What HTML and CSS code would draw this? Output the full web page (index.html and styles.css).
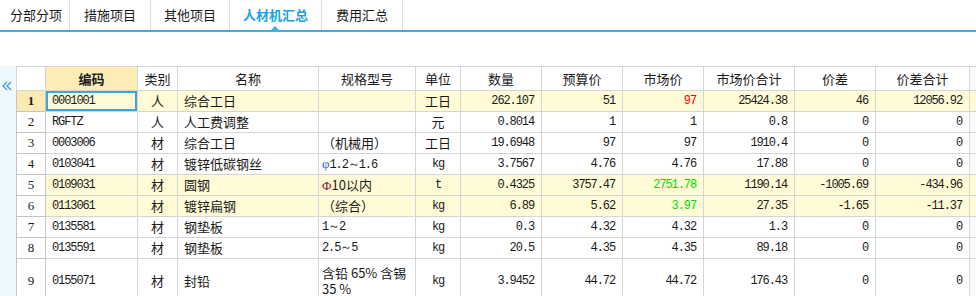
FILE: index.html
```html
<!DOCTYPE html>
<html lang="zh">
<head>
  <meta charset="UTF-8">
  <title>人材机汇总</title>
  <link rel="stylesheet" href="styles.css">
</head>
<body>

  <div class="tabs">
    <div class="tab first">分部分项</div>
    <div class="tab">措施项目</div>
    <div class="tab">其他项目</div>
    <div class="tab active">人材机汇总</div>
    <div class="tab">费用汇总</div>
  </div>

  <div class="main">
    <div class="side">
      <svg class="fold" width="10" height="10" viewBox="0 0 10 10">
        <path d="M5 1 L1 5 L5 9 M9 1 L5 5 L9 9" fill="none" stroke="#3b9fd2" stroke-width="1.3"/>
      </svg>
      <span class="notch"></span>
    </div>
    <div class="grid">
      <table>
        <colgroup>
          <col style="width:29px"><col style="width:92px"><col style="width:40px"><col style="width:141px">
          <col style="width:97px"><col style="width:45px"><col style="width:81px"><col style="width:81px">
          <col style="width:81px"><col style="width:91px"><col style="width:81px"><col style="width:94px">
          <col style="width:20px">
        </colgroup>
        <thead>
          <tr>
            <th class="rn"></th>
            <th class="sel-col"><b>编码</b></th>
            <th>类别</th>
            <th>名称</th>
            <th>规格型号</th>
            <th>单位</th>
            <th>数量</th>
            <th>预算价</th>
            <th>市场价</th>
            <th>市场价合计</th>
            <th>价差</th>
            <th>价差合计</th>
            <th class="rest"></th>
          </tr>
        </thead>
        <tbody>
          <tr class="hl">
            <td class="rn cur">1</td><td class="code focus">0001001</td><td class="c">人</td><td class="name">综合工日</td>
            <td class="spec"></td><td class="c">工日</td><td class="n">262.107</td><td class="n">51</td>
            <td class="n red">97</td><td class="n">25424.38</td><td class="n">46</td><td class="n">12056.92</td><td class="rest"></td>
          </tr>
          <tr>
            <td class="rn">2</td><td class="code">RGFTZ</td><td class="c">人</td><td class="name">人工费调整</td>
            <td class="spec"></td><td class="c">元</td><td class="n">0.8014</td><td class="n">1</td>
            <td class="n">1</td><td class="n">0.8</td><td class="n">0</td><td class="n">0</td><td class="rest"></td>
          </tr>
          <tr>
            <td class="rn">3</td><td class="code">0003006</td><td class="c">材</td><td class="name">综合工日</td>
            <td class="spec">（机械用）</td><td class="c">工日</td><td class="n">19.6948</td><td class="n">97</td>
            <td class="n">97</td><td class="n">1910.4</td><td class="n">0</td><td class="n">0</td><td class="rest"></td>
          </tr>
          <tr>
            <td class="rn">4</td><td class="code">0103041</td><td class="c">材</td><td class="name">镀锌低碳钢丝</td>
            <td class="spec"><span class="phi">φ</span><span class="m">1.2～1.6</span></td><td class="c m">kg</td><td class="n">3.7567</td><td class="n">4.76</td>
            <td class="n">4.76</td><td class="n">17.88</td><td class="n">0</td><td class="n">0</td><td class="rest"></td>
          </tr>
          <tr class="hl">
            <td class="rn">5</td><td class="code">0109031</td><td class="c">材</td><td class="name">圆钢</td>
            <td class="spec"><span class="phi2">Φ</span>10以内</td><td class="c m">t</td><td class="n">0.4325</td><td class="n">3757.47</td>
            <td class="n green">2751.78</td><td class="n">1190.14</td><td class="n">-1005.69</td><td class="n">-434.96</td><td class="rest"></td>
          </tr>
          <tr class="hl">
            <td class="rn">6</td><td class="code">0113061</td><td class="c">材</td><td class="name">镀锌扁钢</td>
            <td class="spec">（综合）</td><td class="c m">kg</td><td class="n">6.89</td><td class="n">5.62</td>
            <td class="n green">3.97</td><td class="n">27.35</td><td class="n">-1.65</td><td class="n">-11.37</td><td class="rest"></td>
          </tr>
          <tr>
            <td class="rn">7</td><td class="code">0135581</td><td class="c">材</td><td class="name">钢垫板</td>
            <td class="spec m">1～2</td><td class="c m">kg</td><td class="n">0.3</td><td class="n">4.32</td>
            <td class="n">4.32</td><td class="n">1.3</td><td class="n">0</td><td class="n">0</td><td class="rest"></td>
          </tr>
          <tr>
            <td class="rn">8</td><td class="code">0135591</td><td class="c">材</td><td class="name">钢垫板</td>
            <td class="spec m">2.5～5</td><td class="c m">kg</td><td class="n">20.5</td><td class="n">4.35</td>
            <td class="n">4.35</td><td class="n">89.18</td><td class="n">0</td><td class="n">0</td><td class="rest"></td>
          </tr>
          <tr class="tall">
            <td class="rn">9</td><td class="code">0155071</td><td class="c">材</td><td class="name">封铅</td>
            <td class="spec">含铅 65% 含锡<br>35 %</td><td class="c m">kg</td><td class="n">3.9452</td><td class="n">44.72</td>
            <td class="n">44.72</td><td class="n">176.43</td><td class="n">0</td><td class="n">0</td><td class="rest"></td>
          </tr>
        </tbody>
      </table>
    </div>
  </div>

</body>
</html>
```

FILE: styles.css
```css
body {
  margin: 0;
  background: #fff;
  font-family: "Noto Sans CJK SC", "Liberation Sans", sans-serif;
  font-size: 13px;
  color: #1a1a1a;
  overflow: hidden;
}
.tabs {
  display: flex;
  height: 30px;
  border-bottom: 2px solid #3fb0e0;
}
.tab {
  width: 80px;
  line-height: 30px;
  text-align: center;
  border-right: 1px solid #dcdcdc;
  position: relative;
  font-size: 13px;
}
.tab.first {
  width: 70px;
  padding-right: 7px;
  box-sizing: border-box;
  text-align: right;
}
.tab:nth-child(3) { width: 78px; }
.tab.active {
  width: 91px;
  color: #1ba3e2;
  font-weight: bold;
}
.tab.active::after {
  content: "";
  position: absolute;
  left: 41px;
  bottom: 0;
  border: 4px solid transparent;
  border-bottom-color: #3fb0e0;
  border-top: none;
}
.main {
  display: flex;
  margin-top: 34px;
}
.side {
  width: 16px;
  flex: none;
  height: 240px;
  background: #eef9fd;
  position: relative;
}
.fold {
  position: absolute;
  left: 2px;
  top: 15px;
}
.notch {
  position: absolute;
  right: 0;
  top: 15px;
  border: 5px solid transparent;
  border-right-color: #fff;
  border-left: none;
}
.grid {
  flex: 1;
  overflow: hidden;
}
table {
  border-collapse: collapse;
  table-layout: fixed;
  width: 973px;
}
th, td {
  border: 1px solid #d5d5d5;
  padding: 0;
  white-space: nowrap;
  overflow: hidden;
  line-height: 16px;
}
th {
  height: 23px;
  font-weight: normal;
  background: #fff;
  text-align: center;
}
th.sel-col {
  background: #fdecb6;
}
th.rest, td.rest {
  background: #fafafa;
}
td {
  height: 20px;
}
tr.hl td {
  background: #fffbd6;
}
tr.tall td {
  height: 44px;
}
td.rn {
  text-align: center;
  background: #fff;
  font-family: "Liberation Serif", serif;
  font-size: 13px;
  border-color: #c4c4c4;
}
tr.hl td.rn {
  background: #fff;
}
tr.hl td.rn.cur {
  background: #fde9b2;
  font-weight: bold;
}
td.code, td.n, .m {
  font-family: "Liberation Mono", monospace;
  font-size: 12px;
  letter-spacing: -1.1px;
}
td.code {
  padding-left: 6px;
}
td.focus {
  box-shadow: inset 0 0 0 2px #3ba7d6;
}
td.c {
  text-align: center;
}
td.name {
  padding-left: 6px;
}
td.spec {
  padding-left: 3px;
  line-height: 16px;
}
td.n {
  text-align: right;
  padding-right: 7px;
}
.red { color: #f00; }
.green { color: #00e000; }
.phi { color: #3060c0; font-family: "Liberation Serif", serif; }
.phi2 { color: #8a1030; font-family: "Liberation Serif", serif; }
```
